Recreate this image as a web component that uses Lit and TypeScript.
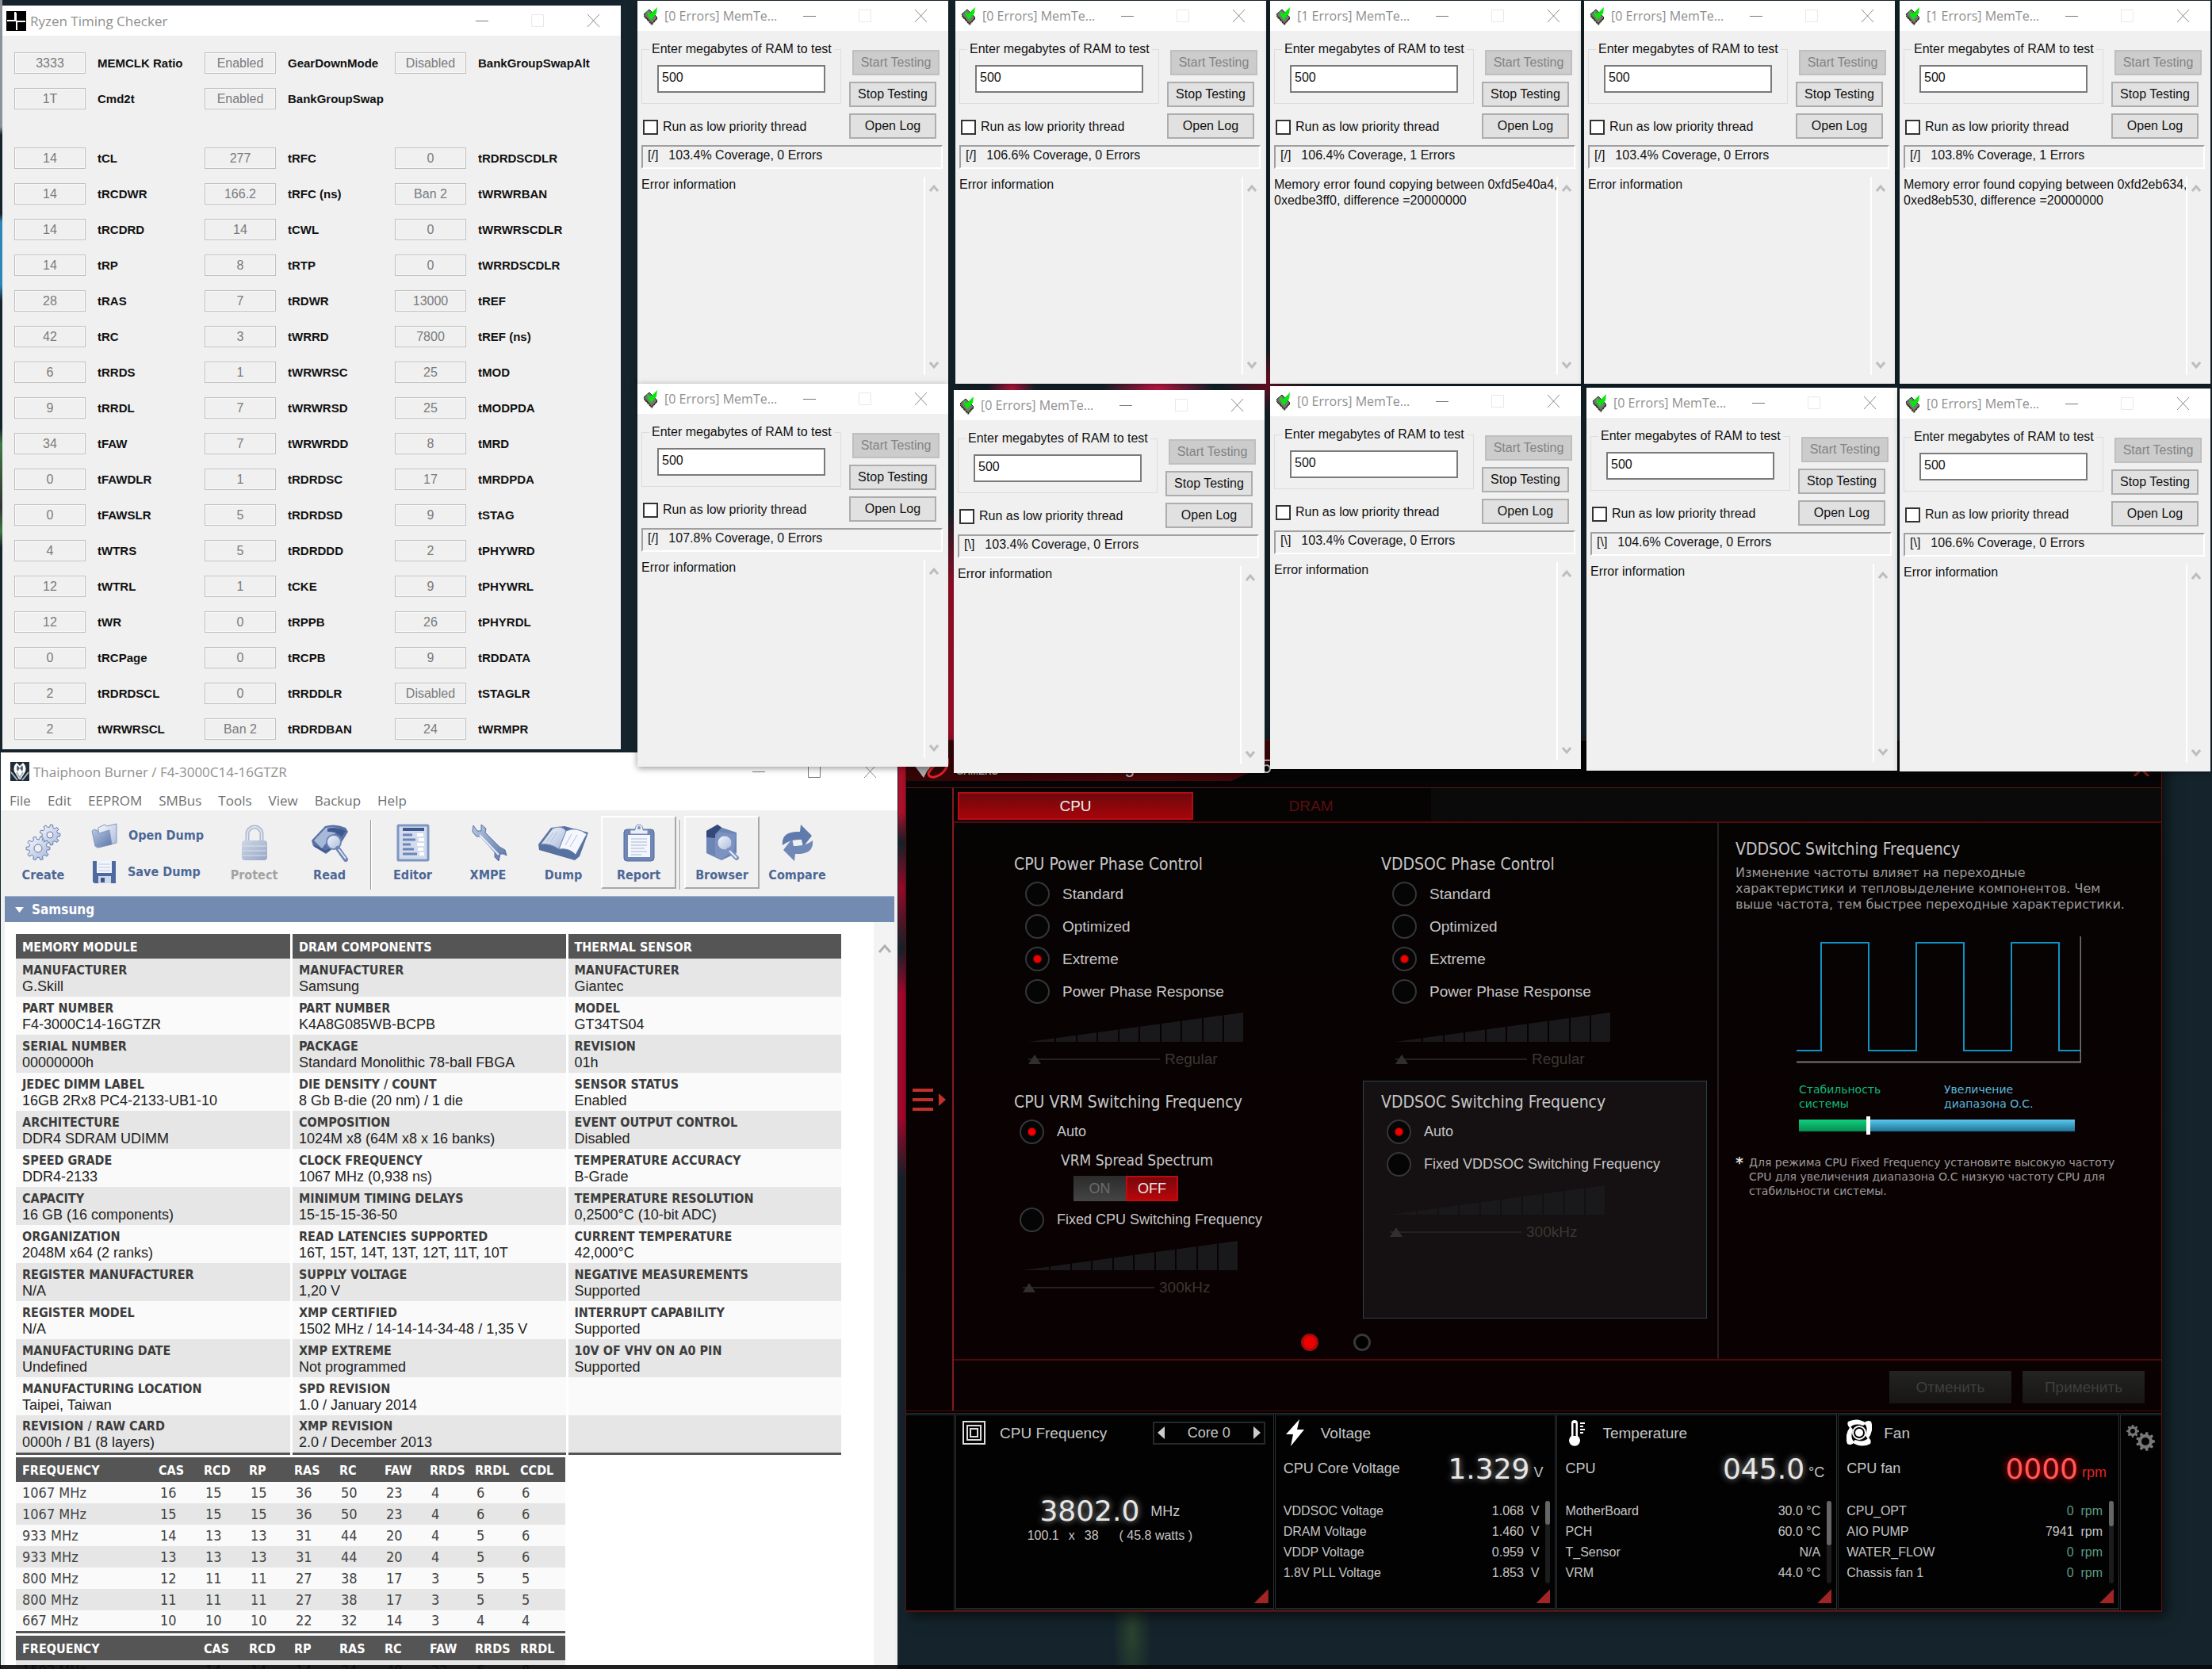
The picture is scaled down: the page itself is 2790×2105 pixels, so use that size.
import { LitElement, html, css, svg, nothing } from "lit";
import { customElement, property } from "lit/decorators.js";
import { classMap } from "lit/directives/class-map.js";
import { styleMap } from "lit/directives/style-map.js";

/* ---------- shared pieces ---------- */

const base = css`
  :host {
    display: block;
    box-sizing: border-box;
    font-family: "Liberation Sans", Arial, sans-serif;
  }
  *,
  *::before,
  *::after {
    box-sizing: border-box;
  }
  button,
  input,
  textarea {
    font: inherit;
    color: inherit;
    margin: 0;
  }
  button {
    padding: 0;
    border: 0;
    background: none;
  }
  svg {
    display: block;
  }
`;

const titleBar = css`
  .title {
    display: flex;
    align-items: center;
    height: 38px;
    background: #fff;
    color: #8f8f8f;
    font-family: "Open Sans", "Noto Sans", sans-serif;
    font-size: 17px;
  }
  .title h1 {
    flex: 1;
    min-width: 0;
    margin: 0;
    font: inherit;
    white-space: nowrap;
  }
  .captions {
    display: flex;
  }
  .caption {
    display: grid;
    place-items: center;
    width: 70px;
    height: 30px;
  }
`;

const minIcon = svg`<svg width="16" height="16" viewBox="0 0 16 16"><path d="M0 8.5H16" stroke="#777"/></svg>`;
const maxIcon = (c: string) =>
  svg`<svg width="16" height="16" viewBox="0 0 16 16"><path d="M.5.5H15.5V15.5H.5Z" fill="none" stroke=${c}/></svg>`;
const closeIcon = svg`<svg width="17" height="16" viewBox="0 0 17 16"><path d="M1 0L16 16M16 0L1 16" stroke="#888" fill="none"/></svg>`;

const caption = (maxColor = "#e8e8e8") => html`<div class="captions">
  <button class="caption" aria-label="Minimize">${minIcon}</button>
  <button class="caption" aria-label="Maximize">${maxIcon(maxColor)}</button>
  <button class="caption" aria-label="Close">${closeIcon}</button>
</div>`;

const gearPath = (cx: number, cy: number, r: number, teeth: number, hole: number) => {
  const pts: string[] = [];
  const step = (Math.PI * 2) / teeth;
  for (let i = 0; i < teeth; i++) {
    const a = i * step;
    for (const [f, k] of [
      [-0.3, 0.76],
      [-0.18, 1],
      [0.18, 1],
      [0.3, 0.76],
    ]) {
      const t = a + f * step;
      pts.push(`${(cx + Math.cos(t) * r * k).toFixed(1)} ${(cy + Math.sin(t) * r * k).toFixed(1)}`);
    }
  }
  return `M${pts.join("L")}ZM${cx + hole} ${cy}A${hole} ${hole} 0 1 0 ${cx - hole} ${cy}A${hole} ${hole} 0 1 0 ${cx + hole} ${cy}Z`;
};

/* ---------- Ryzen Timing Checker ---------- */

type Timing = [value: string, label: string] | null;

const modes: Timing[] = [
  ["3333", "MEMCLK Ratio"], ["Enabled", "GearDownMode"], ["Disabled", "BankGroupSwapAlt"],
  ["1T", "Cmd2t"], ["Enabled", "BankGroupSwap"], null,
];

const timings: Timing[] = [
  ["14", "tCL"], ["277", "tRFC"], ["0", "tRDRDSCDLR"],
  ["14", "tRCDWR"], ["166.2", "tRFC (ns)"], ["Ban 2", "tWRWRBAN"],
  ["14", "tRCDRD"], ["14", "tCWL"], ["0", "tWRWRSCDLR"],
  ["14", "tRP"], ["8", "tRTP"], ["0", "tWRRDSCDLR"],
  ["28", "tRAS"], ["7", "tRDWR"], ["13000", "tREF"],
  ["42", "tRC"], ["3", "tWRRD"], ["7800", "tREF (ns)"],
  ["6", "tRRDS"], ["1", "tWRWRSC"], ["25", "tMOD"],
  ["9", "tRRDL"], ["7", "tWRWRSD"], ["25", "tMODPDA"],
  ["34", "tFAW"], ["7", "tWRWRDD"], ["8", "tMRD"],
  ["0", "tFAWDLR"], ["1", "tRDRDSC"], ["17", "tMRDPDA"],
  ["0", "tFAWSLR"], ["5", "tRDRDSD"], ["9", "tSTAG"],
  ["4", "tWTRS"], ["5", "tRDRDDD"], ["2", "tPHYWRD"],
  ["12", "tWTRL"], ["1", "tCKE"], ["9", "tPHYWRL"],
  ["12", "tWR"], ["0", "tRPPB"], ["26", "tPHYRDL"],
  ["0", "tRCPage"], ["0", "tRCPB"], ["9", "tRDDATA"],
  ["2", "tRDRDSCL"], ["0", "tRRDDLR"], ["Disabled", "tSTAGLR"],
  ["2", "tWRWRSCL"], ["Ban 2", "tRDRDBAN"], ["24", "tWRMPR"],
];

@customElement("timing-checker")
class TimingChecker extends LitElement {
  static styles = [
    base,
    titleBar,
    css`
      :host {
        background: #f0f0f0;
      }
      .title {
        gap: 5px;
        padding-left: 5px;
      }
      .body {
        display: flex;
        flex-direction: column;
        gap: 48px;
        padding: 21px 15px 12px;
      }
      .grid {
        display: grid;
        grid-template-columns: repeat(3, 240px);
        grid-auto-rows: 27px;
        row-gap: 18px;
      }
      .timing {
        display: flex;
        align-items: center;
        gap: 15px;
        color: #111;
        font-size: 15px;
        font-weight: bold;
        white-space: nowrap;
      }
      .timing input {
        width: 90px;
        height: 27px;
        padding: 0;
        border: 1px solid #c0c0c0;
        outline: 1px solid #f8f8f8;
        outline-offset: -2px;
        background: #f0f0f0;
        color: #7b7b7b;
        font-size: 16px;
        font-weight: normal;
        text-align: center;
      }
    `,
  ];

  cell = (t: Timing) =>
    t
      ? html`<label class="timing"><input readonly .value=${t[0]} />${t[1]}</label>`
      : html`<span></span>`;

  render() {
    return html`
      <header class="title">
        <svg width="25" height="25" viewBox="0 0 25 25">
          <path d="M0 0H25V25H0Z" fill="#000" />
          <path d="M11 1V12H1M13 24V13H24M12 2V13" stroke="#fff" stroke-width="2" fill="none" />
        </svg>
        <h1>Ryzen Timing Checker</h1>
        ${caption()}
      </header>
      <div class="body">
        <div class="grid">${modes.map(this.cell)}</div>
        <div class="grid">${timings.map(this.cell)}</div>
      </div>
    `;
  }
}

/* ---------- MemTest ---------- */

@customElement("mem-test")
class MemTest extends LitElement {
  @property({ type: Number }) errors = 0;
  @property() spinner = "/";
  @property() coverage = "";
  @property() message = "Error information";

  static styles = [
    base,
    titleBar,
    css`
      :host {
        background: #f0f0f0;
        color: #111;
        font-size: 16px;
        line-height: 20px;
      }
      .title {
        gap: 6px;
        padding-left: 7px;
        font-size: 16px;
      }
      .body {
        padding: 0 7px 11px 5px;
      }
      .top {
        display: flex;
        justify-content: space-between;
        padding-right: 4px;
      }
      .left {
        width: 252px;
        padding-top: 13px;
      }
      fieldset {
        margin: 0;
        min-width: 0;
        padding: 10px 19px 13px;
        border: 1px solid #dcdcdc;
      }
      legend {
        margin-left: -10px;
        padding: 0 3px;
        white-space: nowrap;
      }
      .amount {
        display: block;
        width: 100%;
        height: 35px;
        padding: 0 4px 4px;
        border: 2px solid #7a7a7a;
        background: #fff;
      }
      .priority {
        display: flex;
        align-items: center;
        gap: 6px;
        margin: 19px 0 0 2px;
      }
      .priority input {
        appearance: none;
        width: 19px;
        height: 19px;
        border: 2px solid #333;
        background: #fff;
      }
      .actions {
        display: flex;
        flex-direction: column;
        align-items: flex-start;
        gap: 8px;
        width: 114px;
        padding-top: 24px;
      }
      .actions button {
        width: 110px;
        height: 32px;
        border: 2px solid #adadad;
        background: #e1e1e1;
      }
      .actions button:disabled {
        align-self: flex-end;
        border-color: #bfbfbf;
        background: #cccccc;
        color: #838383;
      }
      .status {
        display: flex;
        gap: 13px;
        height: 30px;
        margin: 8px 0 10px;
        padding: 1px 6px;
        border: 2px solid;
        border-color: #a0a0a0 #fff #fff #a0a0a0;
      }
      .log {
        display: flex;
        height: 250px;
      }
      textarea {
        flex: 1;
        min-width: 0;
        padding: 0;
        border: 0;
        background: none;
        resize: none;
        overflow: hidden;
        white-space: pre;
        line-height: 20px;
      }
      .scroll {
        display: flex;
        flex-direction: column;
        align-items: center;
        justify-content: space-between;
        width: 24px;
        padding: 9px 0 7px;
        border-left: 2px solid #fff;
      }
    `,
  ];

  render() {
    const n = this.errors;
    return html`
      <header class="title">
        <svg width="21" height="23" viewBox="0 0 21 23">
          <path d="M1 9L8 3L18 13L11 21Z" fill="#777" stroke="#222" />
          <path d="M1 10L1 12L11 23L18 15V13L11 21Z" fill="#222" />
          <path d="M1 12L11 22L18 15" stroke="#d8d860" stroke-dasharray="2 2" fill="none" />
          <path d="M5 4L9 9L18 0L17 8L10 16L6 10Z" fill="#06e806" />
        </svg>
        <h1>[${n} Errors] MemTe...</h1>
        ${caption()}
      </header>
      <div class="body">
        <div class="top">
          <div class="left">
            <fieldset>
              <legend>Enter megabytes of RAM to test</legend>
              <input class="amount" aria-label="Enter megabytes of RAM to test" value="500" />
            </fieldset>
            <label class="priority"><input type="checkbox" />Run as low priority thread</label>
          </div>
          <div class="actions">
            <button disabled>Start Testing</button>
            <button>Stop Testing</button>
            <button>Open Log</button>
          </div>
        </div>
        <div class="status"><span>[${this.spinner}]</span><span>${this.coverage}% Coverage, ${n} Errors</span></div>
        <div class="log">
          <textarea readonly aria-label="Error information" .value=${this.message}></textarea>
          <div class="scroll">
            <svg width="12" height="10" viewBox="0 0 12 10"><path d="M1 9L6 3L11 9" stroke="#bdbdbd" stroke-width="3" fill="none" /></svg>
            <svg width="12" height="10" viewBox="0 0 12 10"><path d="M1 1L6 7L11 1" stroke="#bdbdbd" stroke-width="3" fill="none" /></svg>
          </div>
        </div>
      </div>
    `;
  }
}

/* ---------- Thaiphoon Burner ---------- */

type Fact = [label: string, value: string] | null;

const facts: [Fact, Fact, Fact][] = [
  [["MANUFACTURER", "G.Skill"], ["MANUFACTURER", "Samsung"], ["MANUFACTURER", "Giantec"]],
  [["PART NUMBER", "F4-3000C14-16GTZR"], ["PART NUMBER", "K4A8G085WB-BCPB"], ["MODEL", "GT34TS04"]],
  [["SERIAL NUMBER", "00000000h"], ["PACKAGE", "Standard Monolithic 78-ball FBGA"], ["REVISION", "01h"]],
  [["JEDEC DIMM LABEL", "16GB 2Rx8 PC4-2133-UB1-10"], ["DIE DENSITY / COUNT", "8 Gb B-die (20 nm) / 1 die"], ["SENSOR STATUS", "Enabled"]],
  [["ARCHITECTURE", "DDR4 SDRAM UDIMM"], ["COMPOSITION", "1024M x8 (64M x8 x 16 banks)"], ["EVENT OUTPUT CONTROL", "Disabled"]],
  [["SPEED GRADE", "DDR4-2133"], ["CLOCK FREQUENCY", "1067 MHz (0,938 ns)"], ["TEMPERATURE ACCURACY", "B-Grade"]],
  [["CAPACITY", "16 GB (16 components)"], ["MINIMUM TIMING DELAYS", "15-15-15-36-50"], ["TEMPERATURE RESOLUTION", "0,2500°C (10-bit ADC)"]],
  [["ORGANIZATION", "2048M x64 (2 ranks)"], ["READ LATENCIES SUPPORTED", "16T, 15T, 14T, 13T, 12T, 11T, 10T"], ["CURRENT TEMPERATURE", "42,000°C"]],
  [["REGISTER MANUFACTURER", "N/A"], ["SUPPLY VOLTAGE", "1,20 V"], ["NEGATIVE MEASUREMENTS", "Supported"]],
  [["REGISTER MODEL", "N/A"], ["XMP CERTIFIED", "1502 MHz / 14-14-14-34-48 / 1,35 V"], ["INTERRUPT CAPABILITY", "Supported"]],
  [["MANUFACTURING DATE", "Undefined"], ["XMP EXTREME", "Not programmed"], ["10V OF VHV ON A0 PIN", "Supported"]],
  [["MANUFACTURING LOCATION", "Taipei, Taiwan"], ["SPD REVISION", "1.0 / January 2014"], null],
  [["REVISION / RAW CARD", "0000h / B1 (8 layers)"], ["XMP REVISION", "2.0 / December 2013"], null],
];

const jedec = [
  ["1067 MHz", 16, 15, 15, 36, 50, 23, 4, 6, 6],
  ["1067 MHz", 15, 15, 15, 36, 50, 23, 4, 6, 6],
  ["933 MHz", 14, 13, 13, 31, 44, 20, 4, 5, 6],
  ["933 MHz", 13, 13, 13, 31, 44, 20, 4, 5, 6],
  ["800 MHz", 12, 11, 11, 27, 38, 17, 3, 5, 5],
  ["800 MHz", 11, 11, 11, 27, 38, 17, 3, 5, 5],
  ["667 MHz", 10, 10, 10, 22, 32, 14, 3, 4, 4],
];
const xmp = [["1502 MHz", 14, 14, 14, 34, 48, 22, 6, 8]];

const blueDefs = svg`<defs>
  <linearGradient id="b" x1="0" y1="0" x2="1" y2="1"><stop offset="0" stop-color="#b9c7e2"/><stop offset="1" stop-color="#5b75a8"/></linearGradient>
  <linearGradient id="l" x1="0" y1="0" x2="1" y2="1"><stop offset="0" stop-color="#f6f8fd"/><stop offset="1" stop-color="#a9b9da"/></linearGradient>
</defs>`;

const toolArt: Record<string, unknown> = {
  Create: svg`<path d=${gearPath(31, 13, 13, 9, 4)} fill="url(#l)" stroke="#5f7aad" fill-rule="evenodd"/><path d=${gearPath(16, 30, 15, 10, 5)} fill="url(#l)" stroke="#5f7aad" fill-rule="evenodd"/>`,
  Protect: svg`<g opacity=".6"><path d="M14 24V12a9 9 0 0 1 18 0V24" fill="none" stroke="#8396bd" stroke-width="5"/><path d="M14 24V12a9 9 0 0 1 18 0V24" fill="none" stroke="#d5deef" stroke-width="2"/><rect x="7" y="20" width="32" height="25" rx="4" fill="url(#b)"/><path d="M8 27H38M8 33H38M8 39H38" stroke="#cdd7ea"/></g>`,
  Read: svg`<path d="M0 20L17 2Q30-2 43 4L46 9L38 22L18 37L2 27Z" fill="#5872a6"/><path d="M3 20L18 4Q28 2 36 5L21 20L13 30Z" fill="#a7b8d9"/><path d="M20 5Q31 2 43 8L38 15Q30 8 20 9Z" fill="#3f588d"/><path d="M4 27L18 34L37 21" stroke="#3f588d" stroke-width="2" fill="none"/><circle cx="28" cy="22" r="9" fill="url(#l)" stroke="#6d85b5" stroke-width="2"/><path d="M33 30L43 44" stroke="#6d85b5" stroke-width="6" stroke-linecap="round"/><path d="M34 31L43 43" stroke="#dfe7f5" stroke-width="2"/>`,
  Editor: svg`<rect x="4" y="1" width="38" height="44" rx="1" fill="#d3dcee" stroke="#7f95c2" stroke-width="3"/><path d="M10 6H37" stroke="#3f588d" stroke-width="4"/><path d="M10 13H22M10 19H26M10 25H20M10 31H24M10 37H28" stroke="#6d85b5" stroke-width="3"/><path d="M28 13H36M30 19H37M28 25H37M29 31H36M31 37H37" stroke="#fff" stroke-width="4"/>`,
  XMPE: svg`<path d="M4 1L3 9L8 15L13 15L31 35L31 41L36 46L38 37L42 37L46 39L44 32L37 28L19 10L20 5L14 0L14 8L9 8Z" fill="url(#b)" stroke="#58719f"/><path d="M12 13L36 38" stroke="#e9eef8" stroke-width="2"/>`,
  Dump: svg`<path d="M-9 25L7 4L24 2L54 10L43 40L37 45L-8 32Z" fill="#56709f"/><path d="M-6 25L9 5Q20 0 26 8L17 31Q5 23-6 25Z" fill="url(#l)" stroke="#7288b5"/><path d="M26 8Q39 2 52 12L38 38Q30 29 17 31Z" fill="#f4f7fd" stroke="#7288b5"/><path d="M10 10L1 22M15 9L6 22M33 12L25 26M40 13L31 28" stroke="#b3c1de"/>`,
  Report: svg`<rect x="4" y="6" width="38" height="40" rx="4" fill="#6e87b7" stroke="#516a9b"/><rect x="9" y="13" width="28" height="28" fill="#f3f6fc"/><path d="M13 18H33M13 22H33M13 26H33M13 30H30M13 34H33M13 38H26" stroke="#a8b7d6"/><path d="M12 12V7H18Q18 0 23 0T28 7H34V12Z" fill="#e9eef8" stroke="#7b91bd"/><circle cx="23" cy="4" r="2" fill="#7b91bd"/>`,
  Browser: svg`<path d="M3 8L17 0L23 4L41 10V36L22 45L3 36Z" fill="#6c85b5"/><path d="M3 8L17 0L22 4L14 12L14 17L3 16Z" fill="#33497a"/><path d="M18 9L40 12L38 32L22 44L14 40V17Z" fill="#7c93c1"/><circle cx="26" cy="23" r="9" fill="url(#l)" stroke="#7d93bf"/><path d="M31 32L41 42" stroke="#7d93bf" stroke-width="6" stroke-linecap="round"/><path d="M32 33L41 42" stroke="#e9eef8" stroke-width="2"/>`,
  Compare: svg`<path d="M4 26Q2 8 26 9L27 0L41 14L30 28L28 19Q14 18 4 26Z" fill="#5f7aad"/><path d="M42 20Q44 38 20 37L19 46L5 32L16 18L18 27Q32 28 42 20Z" fill="#6f88b8"/>`,
};

@customElement("thaiphoon-burner")
class ThaiphoonBurner extends LitElement {
  static styles = [
    base,
    titleBar,
    css`
      :host {
        overflow: hidden;
        background: #f0f0f0;
        color: #333;
      }
      .title {
        height: 48px;
        gap: 5px;
        padding-left: 12px;
      }
      .menu {
        display: flex;
        gap: 21px;
        height: 25px;
        padding-left: 11px;
        background: #fff;
        color: #6f6f6f;
        font-family: "Open Sans", "Noto Sans", sans-serif;
        font-size: 17px;
        line-height: 24px;
      }
      .tools {
        display: flex;
        padding: 7px 6px;
        color: #4d6796;
        font-family: "DejaVu Sans Condensed", "DejaVu Sans", sans-serif;
        font-size: 16px;
        font-weight: bold;
        line-height: 22px;
      }
      .tool {
        display: flex;
        flex-direction: column;
        align-items: center;
        gap: 7px;
        width: 95px;
        height: 92px;
        padding-top: 11px;
      }
      .tool svg,
      .file svg {
        overflow: visible;
      }
      .tool.on {
        border: 2px solid;
        border-color: #fff #a8a8a8 #a8a8a8 #fff;
        padding-top: 9px;
      }
      .tool:disabled {
        color: #a3a3a3;
      }
      .files {
        width: 171px;
        padding: 2px 0 0 14px;
      }
      .file {
        display: flex;
        align-items: center;
        gap: 14px;
        height: 46px;
      }
      .bar {
        width: 2px;
        margin: 5px 4px 1px;
        background: #999;
        border-right: 1px solid #fff;
      }
      .module {
        display: flex;
        align-items: center;
        gap: 10px;
        height: 33px;
        margin: 0 4px 0 5px;
        padding-left: 13px;
        background: #738ab1;
        border-top: 1px solid #9fb0cd;
        color: #fff;
        font-family: "DejaVu Sans Condensed", "DejaVu Sans", sans-serif;
        font-size: 17px;
        font-weight: bold;
      }
      .report {
        display: flex;
        justify-content: space-between;
        margin: 0 4px 0 5px;
        background: #fff;
        min-height: 100vh;
      }
      .tables {
        display: flex;
        flex-direction: column;
        align-items: flex-start;
        gap: 3px;
        padding: 15px 0 0 14px;
      }
      .scroll {
        width: 26px;
        padding: 27px 6px;
        background: #f3f3f3;
      }
      table {
        border-collapse: collapse;
        table-layout: fixed;
        border-bottom: 3px solid #555;
        font-family: "DejaVu Sans Condensed", "DejaVu Sans", sans-serif;
        text-align: left;
      }
      th {
        height: 31px;
        padding: 2px 0 0 8px;
        background: #555;
        color: #fff;
        font-size: 16px;
      }
      .facts {
        width: 1044px;
      }
      .facts th,
      .facts td {
        border-right: 3px solid #fff;
      }
      .facts td {
        height: 48px;
        padding: 4px 0 3px 8px;
        color: #222;
        font-family: "Liberation Sans", Arial, sans-serif;
        font-size: 18px;
        line-height: 20px;
        white-space: nowrap;
      }
      .facts b {
        display: block;
        color: #3c3c3c;
        font-family: "DejaVu Sans Condensed", "DejaVu Sans", sans-serif;
        font-size: 16px;
      }
      .facts tr:nth-child(odd) td {
        background: #e6e6e6;
      }
      .facts tr:nth-child(even) td,
      .speeds td {
        background: #fafafa;
      }
      .speeds {
        width: 693px;
      }
      .speeds th:not(:first-child) {
        width: 57px;
        padding-left: 0;
      }
      .speeds td {
        height: 27px;
        padding: 0 0 0 2px;
        color: #444;
        font-size: 18px;
      }
      .speeds td:first-child {
        padding-left: 8px;
      }
      .speeds .alt td {
        background: #e6e6e6;
      }
    `,
  ];

  tool(name: string, on = false, disabled = false) {
    return html`<button class="tool ${on ? "on" : ""}" ?disabled=${disabled}>
      <svg width="46" height="46" viewBox="0 0 46 46">${blueDefs}${toolArt[name]}</svg>${name}
    </button>`;
  }

  speeds(heads: string[], rows: (string | number)[][], shift: number) {
    return html`<table class="speeds">
      <thead><tr>${heads.map((h) => html`<th>${h}</th>`)}</tr></thead>
      <tbody>
        ${rows.map((r, i) => html`<tr class=${(i + shift) % 2 ? "alt" : ""}>${r.map((v) => html`<td>${v}</td>`)}</tr>`)}
      </tbody>
    </table>`;
  }

  render() {
    const fact = (f: Fact) => html`<td>${f ? html`<b>${f[0]}</b>${f[1]}` : nothing}</td>`;
    const cols = ["CAS", "RCD", "RP", "RAS", "RC", "FAW", "RRDS", "RRDL"];
    return html`
      <header class="title">
        <svg width="24" height="24" viewBox="0 0 24 24">
          <path d="M0 0H24V24H0Z" fill="#1f2d38" />
          <path d="M8 1Q3 6 5 12L11 22H13L19 12Q21 6 16 1L12 5Z" fill="#fff" />
          <path d="M9 4Q7 8 9 12L12 8L15 12Q17 8 15 4L12 8Z" fill="#52616d" />
          <path d="M1 13L9 23M23 13L15 23M8 13L12 20L16 13" stroke="#aab6bf" stroke-width="2" fill="none" />
        </svg>
        <h1>Thaiphoon Burner / F4-3000C14-16GTZR</h1>
        ${caption("#777")}
      </header>
      <nav class="menu">
        ${["File", "Edit", "EEPROM", "SMBus", "Tools", "View", "Backup", "Help"].map((m) => html`<button>${m}</button>`)}
      </nav>
      <div class="tools">
        ${this.tool("Create")}
        <div class="files">
          <button class="file">
            <svg width="32" height="30" viewBox="0 0 32 30">${blueDefs}
              <path d="M8 5L16 1L19 3L31 0V24L8 30Z" fill="url(#l)" stroke="#8196c0" />
              <path d="M0 9L3 7L8 9L9 12L22 8L25 26L7 30L4 28Z" fill="url(#b)" stroke="#8196c0" />
            </svg>Open Dump
          </button>
          <button class="file">
            <svg width="31" height="30" viewBox="0 0 31 30">
              <path d="M1 1H30V29H3L1 27Z" fill="#4f69a0" />
              <path d="M6 1H25V16H6Z" fill="#f2f5fb" /><path d="M8 5H23M8 9H23M8 13H23" stroke="#bcc8e0" />
              <path d="M8 20H24V29H8Z" fill="#cfd8ea" /><path d="M11 22H16V28H11Z" fill="#3c558b" />
            </svg>Save Dump
          </button>
        </div>
        ${this.tool("Protect", false, true)} ${this.tool("Read")}
        <div class="bar"></div>
        ${this.tool("Editor")} ${this.tool("XMPE")} ${this.tool("Dump")} ${this.tool("Report", true)}
        <div class="bar"></div>
        ${this.tool("Browser", true)} ${this.tool("Compare")}
      </div>
      <div class="module">
        <svg width="11" height="7" viewBox="0 0 11 7"><path d="M0 0H11L5.5 7Z" fill="#fff" /></svg>Samsung
      </div>
      <div class="report">
        <div class="tables">
          <table class="facts">
            <thead><tr><th>MEMORY MODULE</th><th>DRAM COMPONENTS</th><th>THERMAL SENSOR</th></tr></thead>
            <tbody>${facts.map((r) => html`<tr>${r.map(fact)}</tr>`)}</tbody>
          </table>
          ${this.speeds(["FREQUENCY", ...cols, "CCDL"], jedec, 0)}
          ${this.speeds(["FREQUENCY", ...cols], xmp, 1)}
        </div>
        <div class="scroll">
          <svg width="16" height="12" viewBox="0 0 16 12"><path d="M1 11L8 3L15 11" stroke="#b0b0b0" stroke-width="3" fill="none" /></svg>
        </div>
      </div>
    `;
  }
}

/* ---------- Dual Intelligent Processors 5 ---------- */

const ramp = () => {
  const w = 271;
  const h = 37;
  const edges = [0, ...Array.from({ length: 9 }, (_, i) => Math.round(33 + i * 26.5)), w];
  const y = (x: number) => h - (x / w) * h;
  return svg`<svg class="ramp" width=${w} height=${h} viewBox="0 0 271 37">${edges.slice(1).map((x1, i) => {
    const x0 = edges[i] + (i ? 2 : 0);
    return svg`<path d="M${x0} ${h}V${y(x0)}L${x1} ${y(x1)}V${h}Z" fill="#19181a"/>`;
  })}</svg>`;
};

type Reading = [name: string, value: string, dim?: boolean];

@customElement("dual-processors")
class DualProcessors extends LitElement {
  static styles = [
    base,
    css`
      :host {
        border: 1px solid #5c1012;
        background: linear-gradient(#050404, #0a0102 50%, #080102);
        color: #c6c6c6;
        font-size: 19px;
        box-shadow: 6px 6px 16px rgba(0, 0, 0, 0.6);
      }
      .head {
        position: relative;
        display: flex;
        align-items: center;
        height: 60px;
        padding: 8px 14px 0 8px;
        border-bottom: 1px solid #5c1318;
        background: #050505;
      }
      .head::before {
        content: "";
        position: absolute;
        inset: 0 auto 8px 0;
        width: 520px;
        background: linear-gradient(90deg, #330507, #4a080b 60%, #3a0709);
        clip-path: polygon(0 0, 100% 0, 410px 100%, 0 100%);
      }
      .head > * {
        position: relative;
      }
      .brand {
        align-self: flex-end;
        width: 114px;
        padding: 0 0 13px 9px;
        font-size: 12px;
        font-weight: bold;
      }
      .head h1 {
        flex: 1;
        margin: 0;
        font-size: 23px;
        font-weight: normal;
      }
      .work {
        display: flex;
      }
      .rail {
        display: grid;
        place-items: center;
        width: 60px;
        border-right: 2px solid #84191f;
      }
      .main {
        flex: 1;
        min-width: 0;
      }
      .tabs {
        display: flex;
        padding: 5px 0 2px 5px;
        border-bottom: 2px solid #5a060c;
        background: linear-gradient(#0a0a0a, #0a0a0a) right / calc(100% - 602px) 100% no-repeat, #050403;
      }
      .tabs button {
        width: 297px;
        height: 35px;
        color: #5a0e0e;
      }
      .tabs .active {
        border: 2px solid #b30c12;
        background: linear-gradient(#6f080c, #a5050a);
        color: #eee;
      }
      .content {
        display: flex;
      }
      .left {
        flex: 1;
        padding-top: 25px;
      }
      .groups {
        display: grid;
        grid-template-columns: 1fr 1fr;
        grid-auto-rows: 300px;
        column-gap: 29px;
        padding: 0 13px 0 53px;
      }
      .group {
        margin: 0;
        padding: 13px 22px;
        border: 1px solid transparent;
      }
      .group.focus {
        border-color: #2b434d;
        background: #151011;
      }
      .group.small {
        font-size: 18px;
      }
      h2 {
        margin: 0;
        font-family: "DejaVu Sans Condensed", "DejaVu Sans", sans-serif;
        font-size: 21px;
        font-weight: normal;
        line-height: 26px;
        white-space: nowrap;
      }
      .group h2 {
        margin-bottom: 4px;
      }
      .indent {
        padding-left: 7px;
      }
      .opts {
        padding-left: 7px;
      }
      .option {
        display: flex;
        align-items: center;
        gap: 16px;
        height: 41px;
        white-space: nowrap;
      }
      .option input {
        appearance: none;
        flex: none;
        width: 31px;
        height: 31px;
        border: 2px solid #343639;
        border-radius: 50%;
        background: #060506;
      }
      .option input:checked {
        background: radial-gradient(circle, #f00000 4px, #060506 6px);
      }
      .ramp {
        margin: 6px 0 11px 4px;
      }
      .level {
        display: flex;
        align-items: center;
        gap: 6px;
        height: 22px;
        padding-left: 4px;
        color: #3b3733;
        font-size: 19px;
      }
      .level input {
        appearance: none;
        width: 166px;
        height: 16px;
        background: linear-gradient(#222, #222) center / 100% 2px no-repeat;
      }
      .level input::-webkit-slider-thumb {
        appearance: none;
        width: 16px;
        height: 12px;
        background: #302e2e;
        clip-path: polygon(50% 0, 100% 100%, 0 100%);
      }
      .spread {
        margin: 4px 0 9px 52px;
        font-family: "DejaVu Sans Condensed", "DejaVu Sans", sans-serif;
        font-size: 19px;
        line-height: 22px;
      }
      .toggle {
        display: flex;
        margin: 0 0 3px 68px;
      }
      .toggle button {
        width: 66px;
        height: 32px;
        background: linear-gradient(#2b2b2b, #454545);
        color: #6b6b6b;
      }
      .toggle .off {
        border: 2px solid #c00a10;
        background: linear-gradient(#78080c, #b8060a);
        color: #e8e8e8;
      }
      .pager {
        display: flex;
        justify-content: center;
        align-items: center;
        gap: 44px;
        height: 51px;
        padding: 8px 0 0 0;
      }
      .pager button {
        width: 22px;
        height: 22px;
        border: 3px solid #38383a;
        border-radius: 50%;
        background: #000;
      }
      .pager .now {
        border-color: #a30c0c;
        background: #ec0000;
      }
      .help {
        width: 560px;
        padding: 20px 0 0 21px;
        border-left: 2px solid #212121;
        font-family: "DejaVu Sans", Verdana, sans-serif;
      }
      .help p {
        margin: 7px 0 30px;
        color: #9a9a9a;
        font-size: 16px;
        line-height: 20px;
      }
      .scale {
        width: 350px;
        margin: 24px 0 26px 80px;
        font-size: 14px;
        line-height: 18px;
      }
      .ends {
        display: grid;
        grid-template-columns: 183px 1fr;
        margin-bottom: 7px;
        color: #5cb9dd;
      }
      .ends span:first-child {
        color: #0fba76;
      }
      .help .note {
        display: grid;
        grid-template-columns: 17px 1fr;
        margin: 0;
        font-size: 14px;
        line-height: 18px;
      }
      .note b {
        font-size: 19px;
        color: #ddd;
      }
      .foot {
        display: flex;
        justify-content: flex-end;
        gap: 14px;
        padding: 13px 21px 9px;
        border-top: 2px solid #55060b;
      }
      .foot button {
        width: 154px;
        height: 41px;
        background: linear-gradient(#232322, #171615);
        color: #3f3f3f;
      }
      .monitor {
        display: grid;
        grid-template-columns: 60px 403fr 356fr 355fr 356fr 54px;
        height: 253px;
        padding-top: 2px;
        border-top: 1px solid #55060b;
        border-bottom: 1px solid #4a1411;
        background: #020202;
      }
      .card {
        position: relative;
        min-width: 0;
        padding: 5px 6px 0 10px;
        border: 3px double #2b3033;
        border-right: 0;
        font-size: 16px;
        line-height: 25px;
      }
      .card.clocks {
        padding: 5px 10px 0 8px;
      }
      .card::after {
        content: "";
        position: absolute;
        right: 6px;
        bottom: 6px;
        width: 18px;
        height: 18px;
        background: #a02626;
        clip-path: polygon(100% 0, 100% 100%, 0 100%);
      }
      .side {
        border-top: 3px double #2b3033;
      }
      .cogs {
        display: flex;
        justify-content: center;
        align-items: flex-start;
        padding-top: 12px;
        border-top: 3px double #2b3033;
        border-left: 3px double #2b3033;
      }
      .card header {
        display: flex;
        align-items: center;
        gap: 15px;
        height: 34px;
      }
      .card h3 {
        flex: 1;
        margin: 0;
        font-size: 19px;
        font-weight: normal;
        white-space: nowrap;
      }
      .card svg {
        flex: none;
        width: 32px;
      }
      .core {
        display: flex;
        align-items: center;
        justify-content: space-between;
        width: 142px;
        height: 29px;
        padding: 0 4px;
        border: 2px solid #26292b;
        font-size: 18px;
      }
      .card .core svg {
        width: 9px;
      }
      .reading {
        display: flex;
        align-items: center;
        justify-content: flex-end;
        gap: 5px;
        height: 34px;
        margin: 11px 9px 24px 0;
        font-size: 18px;
      }
      .reading span:first-child {
        flex: 1;
      }
      .big {
        color: #e6e6e6;
        font-family: "DejaVu Sans", Verdana, sans-serif;
        font-size: 36px;
        text-shadow: 0 0 8px #aaa;
      }
      .red,
      .red .big {
        color: #e02626;
      }
      .red .big {
        color: #ff5a5a;
        text-shadow: 0 0 8px #f00;
      }
      .unit {
        align-self: flex-end;
        line-height: 24px;
      }
      .clock {
        display: flex;
        justify-content: center;
        gap: 14px;
        height: 36px;
        margin: 64px 10px 2px 0;
        font-size: 18px;
        line-height: 36px;
      }
      .calc {
        display: flex;
        justify-content: center;
        gap: 12px;
        margin-right: 10px;
        font-size: 16px;
        line-height: 22px;
      }
      .calc span:last-child {
        margin-left: 14px;
      }
      .lines {
        display: flex;
        gap: 8px;
        margin: 0;
      }
      .lines dl {
        flex: 1;
        display: grid;
        grid-template-columns: 1fr auto;
        margin: 0;
      }
      .lines dd {
        margin: 0;
        text-align: right;
        white-space: pre;
      }
      .lines .dim {
        color: #5e9c84;
      }
      .track {
        width: 6px;
        height: 104px;
        border-radius: 3px;
        background: #1c1c1c;
      }
      .thumb {
        border-radius: 3px;
        background: #666;
      }
    `,
  ];

  option = (group: string, text: string, on = false) =>
    html`<label class="option"><input type="radio" name=${group} ?checked=${on} />${text}</label>`;

  level = (text: string) => html`${ramp()}
    <label class="level"><input type="range" min="0" max="10" value="0" aria-label=${text} />${text}</label>`;

  phase = (title: string, group: string) => html`<section class="group">
    <h2>${title}</h2>
    <div class="indent">
      <div class="opts">
        ${["Standard", "Optimized", "Extreme", "Power Phase Response"].map((t) => this.option(group, t, t === "Extreme"))}
      </div>
      <div class="indent">${this.level("Regular")}</div>
    </div>
  </section>`;

  card(icon: unknown, title: string, label: string, value: string, unit: string, rows: Reading[], thumb: number, red = false) {
    return html`<section class="card">
      <header>${icon}<h3>${title}</h3></header>
      <div class=${classMap({ reading: true, red })}>
        <span style=${styleMap({ color: red ? "#c6c6c6" : null })}>${label}</span><span class="big">${value}</span><span class="unit">${unit}</span>
      </div>
      <div class="lines">
        <dl>${rows.map(([n, v, dim]) => html`<dt>${n}</dt><dd class=${dim ? "dim" : ""}>${v}</dd>`)}</dl>
        <div class="track"><div class="thumb" style=${styleMap({ height: `${thumb}px` })}></div></div>
      </div>
    </section>`;
  }

  render() {
    const bolt = svg`<svg width="32" height="34" viewBox="0 0 32 34"><path d="M20 0L3 19H12L9 34L26 13H17Z" fill="#fff"/></svg>`;
    const thermo = svg`<svg width="32" height="34" viewBox="0 0 32 34"><path d="M12 1a4 4 0 0 0-4 4V21a7 7 0 1 0 8 0V5a4 4 0 0 0-4-4Z" fill="#fff"/><path d="M12 5V21" stroke="#000" stroke-width="3"/><path d="M19 5H25M19 9H23M19 13H25M19 17H23" stroke="#fff" stroke-width="2"/></svg>`;
    const fan = svg`<svg width="32" height="34" viewBox="0 0 32 34"><g fill="#fff"><path d="M2 3Q14-3 25 5L21 8Q10 4 4 11Q0 7 2 3Z"/><path d="M31 3Q35 14 27 25L24 21Q28 10 22 5Q26 0 31 3Z"/><path d="M30 31Q18 37 7 29L11 26Q22 30 28 23Q32 27 30 31Z"/><path d="M1 31Q-3 20 5 9L8 13Q4 24 10 29Q6 34 1 31Z"/></g><circle cx="16" cy="17" r="8" fill="none" stroke="#fff" stroke-width="2"/><circle cx="16" cy="17" r="5" fill="#fff"/></svg>`;
    return html`
      <header class="head">
        <svg width="46" height="30" viewBox="0 0 46 30">
          <path d="M2 12L14 28L18 20Q30 4 45 2Q32 0 16 14Q8 14 2 12Z" fill="#aaa" />
          <path d="M20 22Q30 6 45 5Q44 22 28 27Q20 28 20 22Z" fill="none" stroke="#e0222a" stroke-width="3" />
        </svg>
        <div class="brand">GAMERS</div>
        <h1>Dual Intelligent Processors 5</h1>
        <button aria-label="Close"><svg width="22" height="22" viewBox="0 0 22 22"><path d="M2 4L20 22M20 4L2 22" stroke="#8e1f18" stroke-width="3" /></svg></button>
      </header>
      <div class="work">
        <div class="rail">
          <button aria-label="Open menu">
            <svg width="43" height="30" viewBox="0 0 43 30"><path d="M0 3H26M0 15H26M0 27H26" stroke="#c2302c" stroke-width="4" /><path d="M33 7L42 15L33 23Z" fill="#c2302c" /></svg>
          </button>
        </div>
        <div class="main">
          <nav class="tabs"><button class="active">CPU</button><button>DRAM</button></nav>
          <div class="content">
            <div class="left">
              <div class="groups">
                ${this.phase("CPU Power Phase Control", "cpu-phase")} ${this.phase("VDDSOC Phase Control", "soc-phase")}
                <section class="group small">
                  <h2>CPU VRM Switching Frequency</h2>
                  <div class="opts">
                    ${this.option("vrm", "Auto", true)}
                    <div class="spread">VRM Spread Spectrum</div>
                    <div class="toggle"><button>ON</button><button class="off">OFF</button></div>
                    ${this.option("vrm", "Fixed CPU Switching Frequency")} ${this.level("300kHz")}
                  </div>
                </section>
                <section class="group small focus">
                  <h2>VDDSOC Switching Frequency</h2>
                  <div class="opts">
                    ${this.option("soc", "Auto", true)} ${this.option("soc", "Fixed VDDSOC Switching Frequency")}
                    ${this.level("300kHz")}
                  </div>
                </section>
              </div>
              <div class="pager"><button class="now" aria-label="Page 1"></button><button aria-label="Page 2"></button></div>
            </div>
            <aside class="help">
              <h2>VDDSOC Switching Frequency</h2>
              <p>Изменение частоты влияет на переходные<br />характеристики и тепловыделение компонентов. Чем<br />выше частота, тем быстрее переходные характеристики.</p>
              <svg width="436" height="160" viewBox="-77 0 436 160" fill="none">
                <path d="M0 158.5H358.5V0" stroke="#777" stroke-width="2" />
                <path d="M0 144H31V8H91V144H151V8H211V144H271V8H331V144H358" stroke="#0d94c4" stroke-width="2" />
              </svg>
              <div class="scale">
                <div class="ends"><span>Стабильность<br />системы</span><span>Увеличение<br />диапазона O.C.</span></div>
                <svg width="348" height="23" viewBox="0 0 348 23">
                  <defs>
                    <linearGradient id="g" x2="0" y2="1"><stop stop-color="#12cf80" /><stop offset="1" stop-color="#048f4f" /></linearGradient>
                    <linearGradient id="c" x2="0" y2="1"><stop stop-color="#5cc8f0" /><stop offset="1" stop-color="#1c7396" /></linearGradient>
                  </defs>
                  <rect y="4" width="87" height="15" fill="url(#g)" /><rect x="87" y="4" width="261" height="15" fill="url(#c)" />
                  <rect x="85" width="5" height="23" fill="#fff" />
                </svg>
              </div>
              <p class="note"><b>*</b><span>Для режима CPU Fixed Frequency установите высокую частоту<br />CPU для увеличения диапазона O.C низкую частоту CPU для<br />стабильности системы.</span></p>
            </aside>
          </div>
          <footer class="foot"><button>Отменить</button><button>Применить</button></footer>
        </div>
      </div>
      <div class="monitor">
        <div class="side"></div>
        <section class="card clocks">
          <header>
            <svg width="32" height="32" viewBox="0 0 32 32" fill="none" stroke="#ddd"><path d="M1 2H28V30H1Z" stroke-width="2" /><path d="M6 7H23V25H6Z" stroke-width="2" /><path d="M10 11H19V21H10Z" stroke-width="2" /></svg>
            <h3>CPU Frequency</h3>
            <div class="core">
              <button aria-label="Previous core"><svg width="9" height="16" viewBox="0 0 9 16"><path d="M9 0V16L0 8Z" fill="#ccc" /></svg></button>
              Core 0
              <button aria-label="Next core"><svg width="9" height="16" viewBox="0 0 9 16"><path d="M0 0V16L9 8Z" fill="#ccc" /></svg></button>
            </div>
          </header>
          <div class="clock"><span class="big">3802.0</span><span>MHz</span></div>
          <div class="calc"><span>100.1</span><span>x</span><span>38</span><span>( 45.8 watts )</span></div>
        </section>
        ${this.card(bolt, "Voltage", "CPU Core Voltage", "1.329", "V", [["VDDSOC Voltage", "1.068  V"], ["DRAM Voltage", "1.460  V"], ["VDDP Voltage", "0.959  V"], ["1.8V PLL Voltage", "1.853  V"]], 30)}
        ${this.card(thermo, "Temperature", "CPU", "045.0", "°C", [["MotherBoard", "30.0 °C"], ["PCH", "60.0 °C"], ["T_Sensor", "N/A"], ["VRM", "44.0 °C"]], 56)}
        ${this.card(fan, "Fan", "CPU fan", "0000", "rpm", [["CPU_OPT", "0  rpm", true], ["AIO PUMP", "7941  rpm"], ["WATER_FLOW", "0  rpm", true], ["Chassis fan 1", "0  rpm", true]], 32, true)}
        <button class="cogs" aria-label="Settings">
          <svg width="37" height="34" viewBox="0 0 37 34" fill="#777" fill-rule="evenodd"><path d=${gearPath(8, 8, 8, 8, 3)} /><path d=${gearPath(24, 21, 12, 9, 5)} /></svg>
        </button>
      </div>
    `;
  }
}

/* ---------- desktop ---------- */

interface Tester {
  x: number;
  y: number;
  errors: number;
  spinner: string;
  coverage: string;
  message?: string;
}

const testers: Tester[] = [
  { x: 804, y: 1, errors: 0, spinner: "/", coverage: "103.4" },
  { x: 1205, y: 1, errors: 0, spinner: "/", coverage: "106.6" },
  { x: 1602, y: 1, errors: 1, spinner: "/", coverage: "106.4", message: "Memory error found copying between 0xfd5e40a4,\n0xedbe3ff0, difference =20000000" },
  { x: 1998, y: 1, errors: 0, spinner: "/", coverage: "103.4" },
  { x: 2396, y: 1, errors: 1, spinner: "/", coverage: "103.8", message: "Memory error found copying between 0xfd2eb634,\n0xed8eb530, difference =20000000" },
  { x: 804, y: 484, errors: 0, spinner: "/", coverage: "107.8" },
  { x: 1203, y: 492, errors: 0, spinner: "\\", coverage: "103.4" },
  { x: 1602, y: 487, errors: 0, spinner: "\\", coverage: "103.4" },
  { x: 2001, y: 489, errors: 0, spinner: "\\", coverage: "104.6" },
  { x: 2396, y: 490, errors: 0, spinner: "\\", coverage: "106.6" },
];

@customElement("app-root")
class AppRoot extends LitElement {
  static styles = [
    base,
    css`
      :host {
        position: relative;
        height: 100vh;
        overflow: hidden;
        background: radial-gradient(ellipse 24px 90px at 1428px 2060px, #2b432f, transparent),
          radial-gradient(ellipse 30px 40px at 1276px 490px, #c01540, transparent),
          radial-gradient(ellipse 70px 40px at 1460px 490px, #d01848, transparent),
          radial-gradient(ellipse 60px 40px at 1600px 480px, #7a1028, transparent),
          linear-gradient(#14242c, #a3102c 10%, #b8102e 40%, #14242c 44%, #a00a2c 50%, #14242c 58%, #b00530 64%, #b00530 80%, #14242c 88%)
            1133px 640px / 70px 960px no-repeat,
          linear-gradient(#8c9299 160px, #14242c 170px, #14242c 270px, #2c86b8 280px, #2c86b8 360px, #14242c 380px, #14242c 540px, #3f7a44 560px, #333 640px, #3f7a44 670px, #14242c 690px) 0 0 / 3px 930px no-repeat,
          #15242c;
      }
      .window {
        position: absolute;
      }
      .timings {
        left: 3px;
        top: 7px;
        width: 780px;
      }
      .spd {
        left: 1px;
        top: 949px;
        bottom: 0;
        width: 1131px;
      }
      .asus {
        left: 1142px;
        right: 63px;
        top: 933px;
      }
      .tester {
        width: 392px;
        box-shadow: 0 2px 8px rgba(0, 0, 0, 0.4);
      }
      .taskbar {
        position: absolute;
        inset: auto 0 0 0;
        height: 5px;
        background: rgba(8, 8, 8, 0.9);
      }
    `,
  ];

  render() {
    return html`
      <dual-processors class="window asus"></dual-processors>
      <timing-checker class="window timings"></timing-checker>
      <thaiphoon-burner class="window spd"></thaiphoon-burner>
      ${testers.map(
        (t) => html`<mem-test
          class="window tester"
          style=${styleMap({ left: `${t.x}px`, top: `${t.y}px` })}
          .errors=${t.errors}
          .spinner=${t.spinner}
          .coverage=${t.coverage}
          .message=${t.message ?? "Error information"}
        ></mem-test>`
      )}
      <div class="taskbar"></div>
    `;
  }
}
